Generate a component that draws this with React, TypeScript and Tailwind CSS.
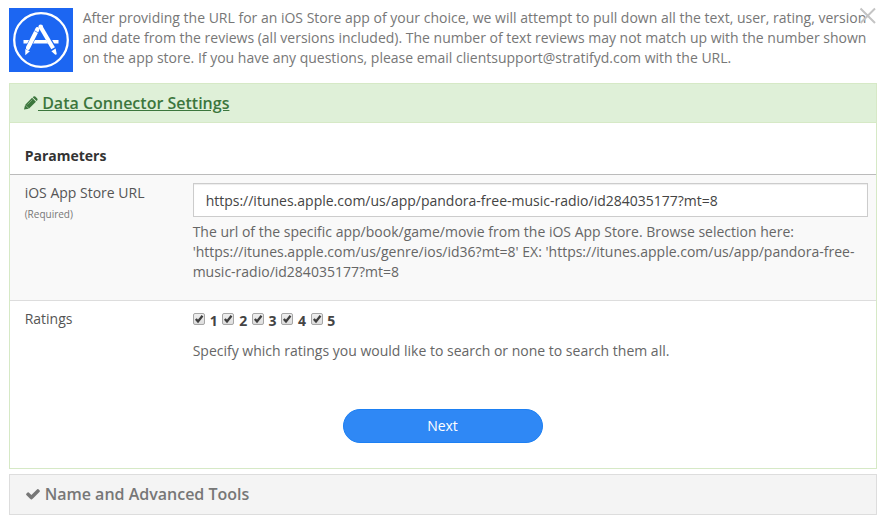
import React from "react";

const ratings = ["1", "2", "3", "4", "5"];

function AppStoreLogo() {
  return (
    <svg className="block h-16 w-16 shrink-0" viewBox="0 0 64 64" fill="none">
      <rect width="64" height="64" fill="#1c66f2" />
      <circle cx="32" cy="32" r="26.8" stroke="#fff" strokeWidth="2.3" />
      <path d="M14.5 33.7h35" stroke="#fff" strokeWidth="3.6" />
      <path d="M28.6 20.8 18.4 41" stroke="#1c66f2" strokeWidth="5.2" />
      <path d="M28.4 21.2 19 39.8" stroke="#fff" strokeWidth="4.2" strokeLinecap="round" />
      <path d="m25.2 22.6 4.6 2.5" stroke="#1c66f2" strokeWidth=".7" />
      <path d="M31.5 17 45.3 41" stroke="#1c66f2" strokeWidth="5.2" />
      <path d="m31.5 18.8 12.6 21.4" stroke="#fff" strokeWidth="4.2" />
      <circle cx="31.7" cy="18.7" r="2.3" fill="#fff" />
      <path d="m16.3 41 4.6 2.3-4.6 3.9zM42.4 43.2l4.2-2.6 1.2 5.7-1.5.4z" fill="#fff" />
    </svg>
  );
}

function Checkbox() {
  return (
    <svg className="block h-[13px] w-[13px]" viewBox="0 0 13 13">
      <defs>
        <linearGradient id="box" x1="0" y1="0" x2="0" y2="1">
          <stop offset="0" stopColor="#f0f0f0" />
          <stop offset="1" stopColor="#dcdcdc" />
        </linearGradient>
      </defs>
      <rect x=".5" y=".5" width="11" height="11" rx="1.5" fill="url(#box)" stroke="#a6a6a6" />
      <path d="M2.8 6 5 8.4 9.5 2.8" fill="none" stroke="#3f3f3f" strokeWidth="2.3" />
    </svg>
  );
}

export default function App() {
  return (
    <div className="relative h-[523px] w-[886px] overflow-hidden bg-white px-[9px] pt-2 font-['Open_Sans',sans-serif] text-sm leading-5 text-[#666]">
      <header className="flex h-[75px]">
        <AppStoreLogo />
        <p className="ml-[9.65px] whitespace-nowrap text-[#777]">
          After providing the URL for an iOS Store app of your choice, we will attempt to pull down all the text, user, rating, version
          <br />
          and date from the reviews (all versions included). The number of text reviews may not match up with the number shown
          <br />
          on the app store. If you have any questions, please email clientsupport@stratifyd.com with the URL.
        </p>
      </header>
      <svg className="absolute left-[859px] top-[7px] h-[18px] w-[18px]" viewBox="0 0 18 18">
        <path d="m1.5 1.5 14.5 14.5M16 1.5 1.5 16" stroke="#c4c4c4" strokeWidth="2" />
      </svg>

      <section className="h-[386px] border border-[#d6e9c6]">
        <h2 className="flex h-[39px] items-center border-b border-[#d6e9c6] bg-[#dff0d8] pl-[14.4px] text-base font-semibold text-[#3c763d]">
          <svg className="-mt-px h-[14px] w-[13.6px]" viewBox="0 0 14 14" fill="none">
            <path d="M0 13.8 1.1 9 5 12.8zM1.3 8.7 8.3 1.7 12.3 5.7 5.3 12.7zM9 1 9.8.3q.9-.6 1.8.1l2 2q.7.9.1 1.8l-.8.8z" fill="currentColor" />
            <path d="M3.6 8.6 8.6 3.6" stroke="#dff0d8" strokeWidth=".4" />
          </svg>
          <span className="whitespace-pre underline"> Data Connector Settings</span>
        </h2>
        <h3 className="h-[52px] border-b border-[#bbb] pl-[14.65px] pt-[23px] font-bold text-[#333]">Parameters</h3>
        <div className="flex h-[126px] border-b border-[#ddd] bg-[#f9f9f9] pl-[14.65px] pt-2">
          <div className="w-[168px] text-[#555]">
            <div>iOS App Store URL</div>
            <div className="text-[10px] leading-[22px] text-[#777]">(Required)</div>
          </div>
          <div>
            <input
              className="ml-[0.35px] block h-[34px] w-[675px] border border-[#ccc] bg-white pl-[11.65px] pr-3 text-[#444] shadow-[inset_0_1px_1px_rgba(0,0,0,0.075)] outline-none"
              defaultValue="https://itunes.apple.com/us/app/pandora-free-music-radio/id284035177?mt=8"
            />
            <p className="mt-[5px] whitespace-nowrap">
              The url of the specific app/book/game/movie from the iOS App Store. Browse selection here:
              <br />
              'https://itunes.apple.com/us/genre/ios/id36?mt=8' EX: 'https://itunes.apple.com/us/app/pandora-free-
              <br />
              music-radio/id284035177?mt=8
            </p>
          </div>
        </div>
        <div className="flex pl-[14.65px] pt-2">
          <div className="w-[168px] text-[#555]">Ratings</div>
          <div>
            <div className="ml-[0.35px] flex h-8 pt-1">
              {ratings.map((rating) => (
                <label key={rating} className="flex w-[29.4px]">
                  <Checkbox />
                  <span className="ml-[3.8px] -mt-0.5 font-bold text-[#444]">{rating}</span>
                </label>
              ))}
            </div>
            <p>Specify which ratings you would like to search or none to search them all.</p>
          </div>
        </div>
        <button className="mx-auto mt-12 block h-[34px] w-[200px] rounded-full border border-[#1d80f3] bg-[#2f88f5] pr-px text-white">Next</button>
      </section>

      <section className="mt-[5px] flex h-[41px] items-center border border-[#ddd] bg-[#f4f4f4] pb-px pl-[14.65px] text-base font-semibold text-[#777]">
        <svg className="mr-1 h-4 w-4" viewBox="0 0 1792 1792" fill="currentColor">
          <path d="M1671 566q0 40-28 68l-724 724-136 136q-28 28-68 28t-68-28l-136-136-362-362q-28-28-28-68t28-68l136-136q28-28 68-28t68 28l294 295 656-657q28-28 68-28t68 28l136 136q28 28 28 68z" />
        </svg>
        <span>Name and Advanced Tools</span>
      </section>
    </div>
  );
}
